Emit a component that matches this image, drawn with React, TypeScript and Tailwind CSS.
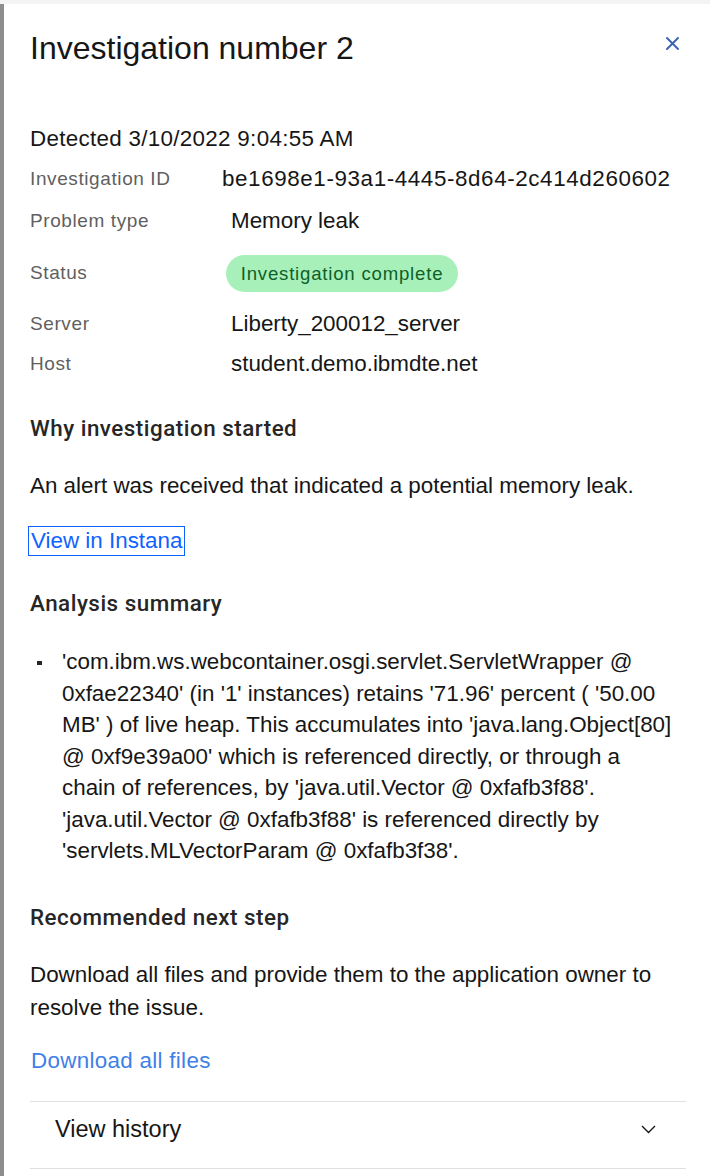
import React from 'react'

const font = { fontFamily: '"Liberation Sans", Arial, sans-serif' }
const heading = { fontFamily: 'Roboto, "Liberation Sans", sans-serif', fontWeight: 500 }

const summaryLines = [
  "'com.ibm.ws.webcontainer.osgi.servlet.ServletWrapper @",
  "0xfae22340' (in '1' instances) retains '71.96' percent ( '50.00",
  "MB' ) of live heap. This accumulates into 'java.lang.Object[80]",
  "@ 0xf9e39a00' which is referenced directly, or through a",
  "chain of references, by 'java.util.Vector @ 0xfafb3f88'.",
  "'java.util.Vector @ 0xfafb3f88' is referenced directly by",
  "'servlets.MLVectorParam @ 0xfafb3f38'.",
]

function Field({ label, children, valueClass = 'ml-[231px]' }: { label: string; children: React.ReactNode; valueClass?: string }) {
  return (
    <div className="relative flex h-[30px] items-center">
      <span className="w-[200px] text-[19px] leading-[30px] tracking-[0.6px] text-[#5f5f5f]">{label}</span>
      <span className={`absolute left-0 text-[22.4px] leading-[30px] text-[#161616] ${valueClass}`}>{children}</span>
    </div>
  )
}

export default function App() {
  return (
    <div style={font} className="flex h-[1176px] w-[710px] flex-col overflow-hidden bg-white">
      <div className="h-[4px] w-full shrink-0 bg-[#f4f4f4]" />
      <div className="flex flex-1">
        <div className="w-[4px] shrink-0 bg-[#8d8d8d]" />
        <div className="flex flex-1 flex-col pl-[26px] pr-[24px] pt-[24px]">
          {/* Header */}
          <div className="flex items-start justify-between">
            <h1 className="text-[32px] leading-[40px] text-[#161616]">Investigation number 2</h1>
            <button className="mr-[6px] mt-[7px] flex h-[16px] w-[16px] items-center justify-center">
              <svg width="15" height="15" viewBox="0 0 15 15" fill="none" stroke="#3d62b8" strokeWidth="2" strokeLinecap="round">
                <line x1="2" y1="2" x2="13" y2="13" />
                <line x1="13" y1="2" x2="2" y2="13" />
              </svg>
            </button>
          </div>

          <p className="mt-[56px] text-[22.4px] leading-[30px] tracking-[0.3px] text-[#161616]">Detected 3/10/2022 9:04:55 AM</p>

          <div className="mt-[10px]">
            <Field label="Investigation ID" valueClass="ml-[192px] tracking-[0.6px]">be1698e1-93a1-4445-8d64-2c414d260602</Field>
          </div>
          <div className="mt-[12px]">
            <Field label="Problem type" valueClass="ml-[201px]">Memory leak</Field>
          </div>
          <div className="mt-[19px] flex h-[37px] items-center">
            <span className="w-[196px] text-[19px] tracking-[0.6px] text-[#5f5f5f]">Status</span>
            <span className="flex h-[37px] w-[232px] items-center justify-center rounded-full bg-[#a7f0ba] text-[18.6px] tracking-[0.8px] text-[#0e6027]">
              Investigation complete
            </span>
          </div>
          <div className="mt-[17px]">
            <Field label="Server" valueClass="ml-[201px]">Liberty_200012_server</Field>
          </div>
          <div className="mt-[10px]">
            <Field label="Host" valueClass="ml-[201px]">student.demo.ibmdte.net</Field>
          </div>

          <h2 className="mt-[34px] text-[22.4px] leading-[30px] tracking-[0.5px] text-[#262626]" style={heading}>
            Why investigation started
          </h2>
          <p className="mt-[28px] text-[22.4px] leading-[30px] text-[#161616]">
            An alert was received that indicated a potential memory leak.
          </p>
          <div className="mt-[25px] flex">
            <a className="-ml-[2px] flex h-[30px] items-center border border-[#0f62fe] px-[2px] text-[22.4px] text-[#0f62fe]" href="#">
              View in Instana
            </a>
          </div>

          <h2 className="mt-[32px] text-[22.4px] leading-[30px] tracking-[0.5px] text-[#262626]" style={heading}>
            Analysis summary
          </h2>
          <ul className="mt-[28px]">
            <li className="flex">
              <span className="ml-[7px] mt-[15px] h-[4px] w-[5px] shrink-0 bg-[#262626]" />
              <span className="ml-[20px] text-[22.4px] leading-[31.5px] text-[#161616]">
                {summaryLines.map((line, i) => (
                  <span key={i} className="block">{line}</span>
                ))}
              </span>
            </li>
          </ul>

          <h2 className="mt-[35px] text-[22.4px] leading-[30px] tracking-[0.5px] text-[#262626]" style={heading}>
            Recommended next step
          </h2>
          <p className="mt-[26px] text-[22.4px] leading-[33px] text-[#161616]">
            Download all files and provide them to the application owner to resolve the issue.
          </p>
          <a href="#" className="ml-[1px] mt-[22px] text-[22.4px] leading-[30px] tracking-[0.3px] text-[#3f7fe6]">
            Download all files
          </a>

          {/* Accordion */}
          <div className="mt-[25px] border-y border-[#e0e0e0]">
            <div className="flex h-[66px] items-start justify-between pl-[25px] pr-[30px] pt-[12px]">
              <span className="text-[23.5px] leading-[30px] text-[#161616]">View history</span>
              <svg className="mt-[11px]" width="15" height="9" viewBox="0 0 15 9" fill="none" stroke="#161616" strokeWidth="1.4">
                <polyline points="1,1 7.5,7.5 14,1" />
              </svg>
            </div>
          </div>
        </div>
      </div>
    </div>
  )
}
